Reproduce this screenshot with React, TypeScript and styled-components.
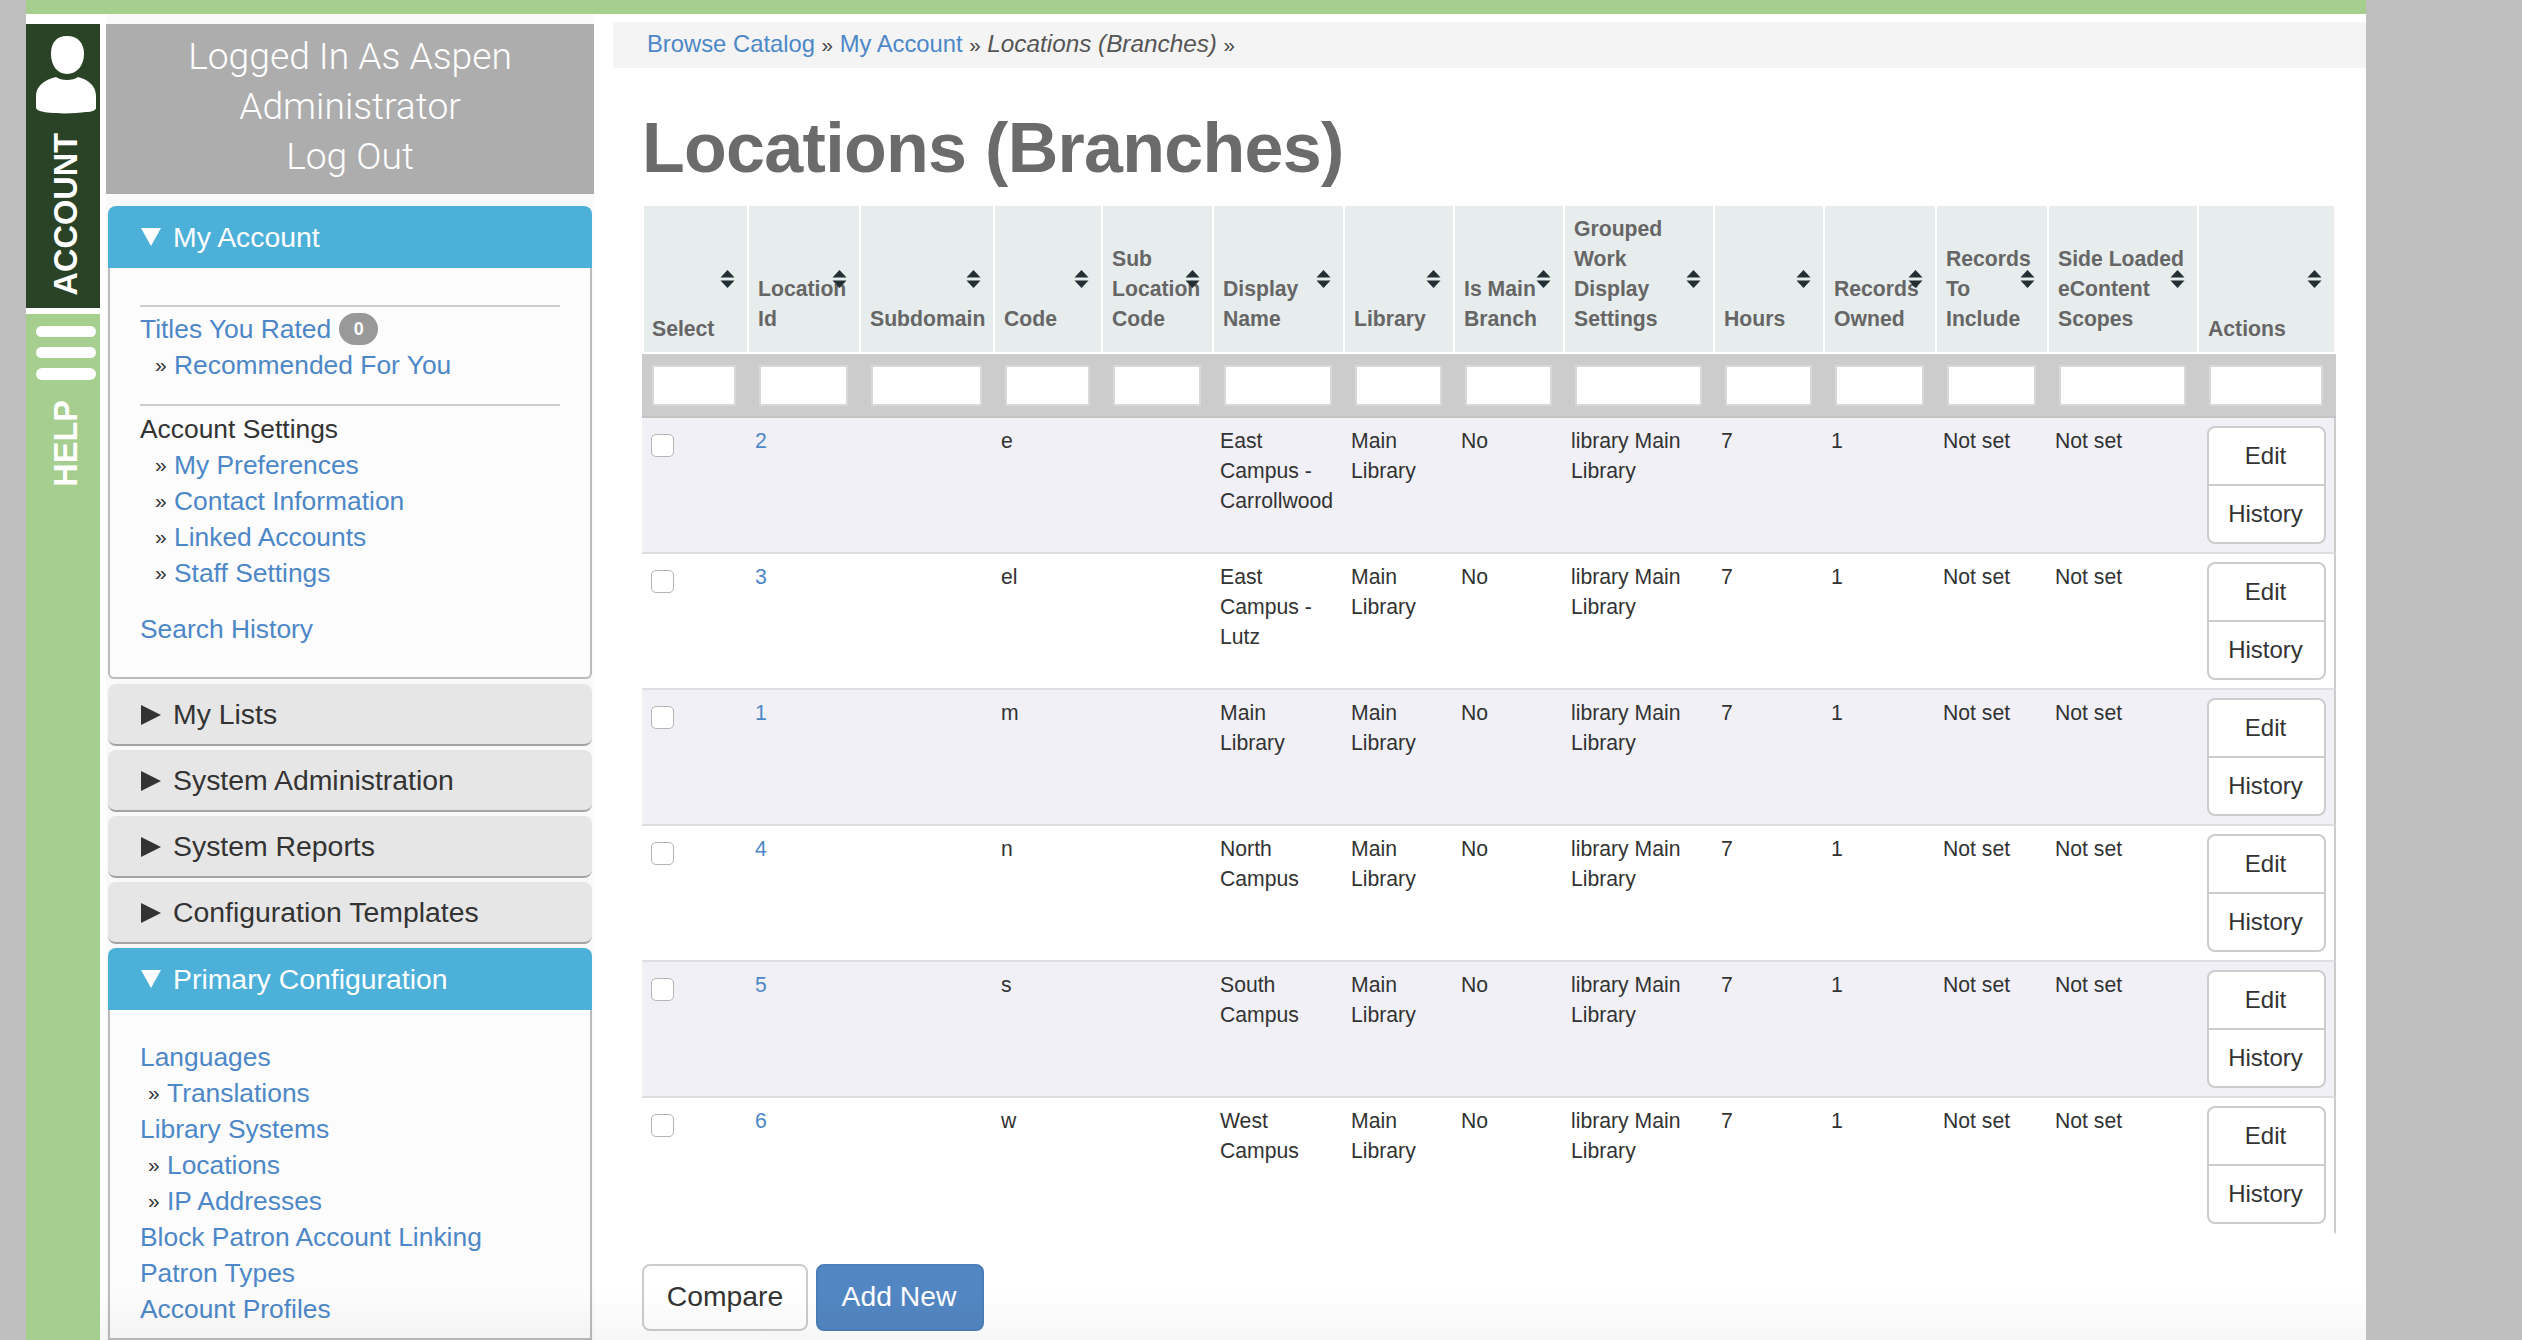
import React from 'react';
import styled, { createGlobalStyle } from 'styled-components';

const GlobalStyle = createGlobalStyle`
  html, body {
    margin: 0;
    height: 1340px;
    overflow: hidden;
    background: #bfbfbf;
    font-family: "Liberation Sans", Arial, sans-serif;
    color: #333;
  }
`;

const Page = styled.div`
  position: relative;
  width: 2340px;
  height: 1340px;
  margin-left: 26px;
  background: #fff;
  overflow: hidden;

  &::after {
    content: '';
    position: absolute;
    left: 74px;
    right: 0;
    bottom: 0;
    height: 50px;
    background: linear-gradient(rgba(0, 0, 0, 0), rgba(0, 0, 0, 0.035));
    pointer-events: none;
  }
`;

const TopBar = styled.div`
  height: 14px;
  background: #a5ce8f;
`;

const Columns = styled.div`
  display: flex;
  height: 1326px;
`;

const Rail = styled.div`
  width: 74px;
  display: flex;
  flex-direction: column;
  padding-top: 10px;
  gap: 6px;
`;

const RailTab = styled.div<{ $dark?: boolean }>`
  display: flex;
  flex-direction: column;
  align-items: center;
  padding-left: 6px;
  box-sizing: border-box;
  background: ${p => (p.$dark ? '#2a4226' : '#a5ce8f')};
  height: ${p => (p.$dark ? '284px' : 'auto')};
  flex: ${p => (p.$dark ? '0 0 auto' : '1')};
  padding-top: 12px;
  color: #fff;
`;

const RailLabel = styled.span<{ $gap: number }>`
  writing-mode: vertical-rl;
  transform: rotate(180deg);
  font-size: 32.5px;
  font-weight: bold;
  line-height: 1;
  margin-top: ${p => p.$gap}px;
`;

const Sidebar = styled.div`
  width: 488px;
  margin-left: 6px;
  background: #f9f9f9;
  padding: 10px 0 0;
  display: flex;
  flex-direction: column;
  box-sizing: border-box;
`;

const LoginBox = styled.div`
  height: 170px;
  background: #adadad;
  color: #fff;
  font-family: Roboto, "Liberation Sans", sans-serif;
  font-weight: 300;
  font-size: 37.2px;
  line-height: 50px;
  text-align: center;
  padding-top: 7px;
  box-sizing: border-box;
  margin-bottom: 12px;
`;

const PanelHeader = styled.div<{ $open?: boolean }>`
  height: 62px;
  box-sizing: border-box;
  margin: 0 2px;
  padding-left: 33px;
  padding-top: ${p => (p.$open ? '0' : '1px')};
  display: flex;
  align-items: center;
  gap: 12px;
  font-size: 28.4px;
  border-radius: ${p => (p.$open ? '8px 8px 0 0' : '8px')};
  background: ${p => (p.$open ? '#4db0d9' : '#e6e6e6')};
  color: ${p => (p.$open ? '#fff' : '#333')};
  border-bottom: ${p => (p.$open ? 'none' : '2px solid #a3a3a3')};
  margin-bottom: ${p => (p.$open ? '0' : '4px')};
`;

const Arrow = styled.span<{ $open?: boolean }>`
  width: 0;
  height: 0;
  border-style: solid;
  border-color: transparent;
  ${p =>
    p.$open
      ? `border-width: 18px 10px 0 10px; border-top-color: #fff;`
      : `border-width: 10px 0 10px 20px; border-left-color: #333;`}
`;

const PanelBody = styled.div<{ $fill?: boolean; $top: number }>`
  margin: 0 2px ${p => (p.$fill ? '0' : '5px')};
  box-sizing: border-box;
  height: ${p => (p.$fill ? 'auto' : '411px')};
  flex: ${p => (p.$fill ? '1' : '0 0 auto')};
  padding: ${p => p.$top}px 30px 0;
  background: #fcfcfc;
  border: 2px solid #bbb;
  border-top: none;
  border-radius: ${p => (p.$fill ? '0' : '0 0 6px 6px')};
  font-size: 26.4px;
  line-height: 36px;
`;

const Rule = styled.hr<{ $before: number; $after: number }>`
  height: 2px;
  margin: ${p => p.$before}px 0 ${p => p.$after}px;
  border: none;
  background: #ccc;
`;

const Link = styled.a`
  color: #4d87c7;
  text-decoration: none;
`;

const MenuRow = styled.div<{ $indent?: number; $before?: number }>`
  display: flex;
  align-items: center;
  height: 36px;
  white-space: nowrap;
  padding-left: ${p => p.$indent ?? 0}px;
  margin-top: ${p => p.$before ?? 0}px;
`;

const Chevrons = styled.span`
  font-size: 21px;
  width: 19px;
  color: #333;
`;

const Badge = styled.span`
  display: inline-flex;
  align-items: center;
  justify-content: center;
  width: 39px;
  height: 32px;
  margin-left: 8px;
  border-radius: 16px;
  background: #999;
  color: #fff;
  font-size: 18px;
  font-weight: bold;
`;

const Main = styled.div`
  flex: 1;
  margin-left: 19px;
  padding-top: 8px;
  min-width: 0;
`;

const Breadcrumbs = styled.div`
  height: 46px;
  background: #f4f4f4;
  padding-left: 34px;
  font-size: 23.8px;
  line-height: 44px;
  color: #444;
`;

const Separator = styled.span`
  font-size: 20.5px;
`;

const Crumb = styled.span`
  font-style: italic;
  font-size: 24.3px;
  color: #555;
`;

const Title = styled.h1`
  margin: 40px 0 18px 29px;
  font-size: 70px;
  letter-spacing: -0.7px;
  line-height: 80px;
  font-weight: bold;
  color: #6b6b6b;
`;

const Content = styled.div`
  margin-left: 29px;
`;

const Table = styled.table`
  width: 1694px;
  table-layout: fixed;
  border-collapse: separate;
  border-spacing: 0;
  font-size: 21.2px;
  line-height: 30px;
`;

const HeadCell = styled.th<{ $low?: boolean }>`
  position: relative;
  height: 148px;
  box-sizing: border-box;
  padding: 0 0 ${p => (p.$low ? '8px' : '18px')} 9px;
  vertical-align: bottom;
  text-align: left;
  font-weight: bold;
  color: #666;
  white-space: nowrap;
  background: #e7eded;
  border-right: 2px solid #fff;
  border-bottom: 2px solid #fff;

  &:first-child {
    border-left: 2px solid #fff;
    padding-left: 8px;
  }
`;

const SortIcon = styled.svg`
  position: absolute;
  top: 64px;
  right: 12px;
  width: 15px;
  height: 18px;
`;

const FilterCell = styled.td`
  height: 64px;
  box-sizing: border-box;
  padding: 0 0 0 10px;
  background: #ccc;
  border-bottom: 2px solid #c4c4c4;
`;

const FilterInput = styled.input`
  display: block;
  width: calc(100% - 13px);
  height: 41px;
  box-sizing: border-box;
  padding: 0;
  background: #fff;
  border: 2px solid #d8d8d8;
  border-radius: 0;
  outline: none;
`;

const Cell = styled.td<{ $odd: boolean }>`
  height: 136px;
  box-sizing: border-box;
  padding: 8px 6px 0;
  vertical-align: top;
  background: ${p => (p.$odd ? '#f0f0f6' : '#fff')};
  border-bottom: 2px solid #dedee2;

  tr:last-child & {
    border-bottom: 2px solid transparent;
  }

  &:last-child {
    border-right: 2px solid #ccc;
  }
`;

const Check = styled.input`
  appearance: none;
  display: block;
  width: 23px;
  height: 23px;
  margin: 8px 0 0 3px;
  background: #fff;
  border: 1.5px solid #b5b5b5;
  border-radius: 5px;
`;

const ActionGroup = styled.div`
  display: flex;
  flex-direction: column;
  width: 119px;
  margin: 0 0 0 2px;
`;

const ActionButton = styled.button`
  height: 58px;
  padding: 0 2px 0 0;
  background: #fff;
  border: 2px solid #ccc;
  color: #333;
  font: 24px "Liberation Sans", Arial, sans-serif;

  &:first-child {
    border-radius: 8px 8px 0 0;
    border-bottom: none;
  }

  &:last-child {
    height: 60px;
    border-radius: 0 0 8px 8px;
  }
`;

const Footer = styled.div`
  display: flex;
  gap: 8px;
  margin-top: 30px;
`;

const FooterButton = styled.button<{ $primary?: boolean }>`
  height: 67px;
  width: ${p => (p.$primary ? '168px' : '166px')};
  padding: 0 ${p => (p.$primary ? '2px' : '0')} 2px 0;
  border-radius: 8px;
  border: 2px solid ${p => (p.$primary ? '#4a7eb8' : '#ccc')};
  background: ${p => (p.$primary ? '#5286c2' : '#fff')};
  color: ${p => (p.$primary ? '#fff' : '#333')};
  font: 28.3px "Liberation Sans", Arial, sans-serif;
`;

const columns = [
  { width: 107, label: ['Select'], low: true },
  { width: 112, label: ['Location', 'Id'] },
  { width: 134, label: ['Subdomain'] },
  { width: 108, label: ['Code'] },
  { width: 111, label: ['Sub', 'Location', 'Code'] },
  { width: 131, label: ['Display', 'Name'] },
  { width: 110, label: ['Library'] },
  { width: 110, label: ['Is Main', 'Branch'] },
  { width: 150, label: ['Grouped', 'Work', 'Display', 'Settings'] },
  { width: 110, label: ['Hours'] },
  { width: 112, label: ['Records', 'Owned'] },
  { width: 112, label: ['Records', 'To', 'Include'] },
  { width: 150, label: ['Side Loaded', 'eContent', 'Scopes'] },
  { width: 137, label: ['Actions'], low: true },
];

const locations = [
  { id: '2', code: 'e', name: ['East', 'Campus -', 'Carrollwood'] },
  { id: '3', code: 'el', name: ['East', 'Campus -', 'Lutz'] },
  { id: '1', code: 'm', name: ['Main', 'Library'] },
  { id: '4', code: 'n', name: ['North', 'Campus'] },
  { id: '5', code: 's', name: ['South', 'Campus'] },
  { id: '6', code: 'w', name: ['West', 'Campus'] },
];

function Lines({ items }: { items: string[] }) {
  return (
    <>
      {items.map((line, i) => (
        <React.Fragment key={line}>
          {i > 0 && <br />}
          {line}
        </React.Fragment>
      ))}
    </>
  );
}

function Sort() {
  return (
    <SortIcon viewBox="0 0 15 18">
      <path d="M7.5 0 L14.5 7.5 H0.5 Z" fill="#222e33" />
      <path d="M0.5 10.5 H14.5 L7.5 18 Z" fill="#222e33" />
    </SortIcon>
  );
}

function SubLink({ children, indent }: { children: string; indent: number }) {
  return (
    <MenuRow $indent={indent}>
      <Chevrons>»</Chevrons>
      <Link>{children}</Link>
    </MenuRow>
  );
}

function App() {
  return (
    <Page>
      <GlobalStyle />
      <TopBar />
      <Columns>
        <Rail>
          <RailTab $dark>
            <svg width="60" height="78" viewBox="0 0 60 78">
              <path
                d="M31 0 C42 0 48 7 48 18 C48 29 41 38 31 38 C21 38 15 29 15 18 C15 7 20 0 31 0 Z"
                fill="#fff"
              />
              <path
                d="M20 41 C25 45 37 45 42 41 C53 44 60 50 60 60 V72 C60 74 56 76 50 76 C38 78 12 78 4 75 C1 74 0 73 0 71 V60 C0 50 8 44 20 41 Z"
                fill="#fff"
              />
            </svg>
            <RailLabel $gap={19}>ACCOUNT</RailLabel>
          </RailTab>
          <RailTab>
            <svg width="60" height="54" viewBox="0 0 60 54">
              <rect x="0" y="0" width="60" height="11" rx="5.5" fill="#fff" />
              <rect x="0" y="21" width="60" height="11" rx="5.5" fill="#fff" />
              <rect x="0" y="42" width="60" height="12" rx="6" fill="#fff" />
            </svg>
            <RailLabel $gap={20}>HELP</RailLabel>
          </RailTab>
        </Rail>

        <Sidebar>
          <LoginBox>
            Logged In As Aspen
            <br />
            Administrator
            <br />
            Log Out
          </LoginBox>

          <PanelHeader $open>
            <Arrow $open />
            My Account
          </PanelHeader>
          <PanelBody $top={37}>
            <Rule $before={0} $after={4} />
            <MenuRow>
              <Link>Titles You Rated</Link>
              <Badge>0</Badge>
            </MenuRow>
            <SubLink indent={15}>Recommended For You</SubLink>
            <Rule $before={21} $after={5} />
            <MenuRow>Account Settings</MenuRow>
            <SubLink indent={15}>My Preferences</SubLink>
            <SubLink indent={15}>Contact Information</SubLink>
            <SubLink indent={15}>Linked Accounts</SubLink>
            <SubLink indent={15}>Staff Settings</SubLink>
            <MenuRow $before={20}>
              <Link>Search History</Link>
            </MenuRow>
          </PanelBody>

          {['My Lists', 'System Administration', 'System Reports', 'Configuration Templates'].map(name => (
            <PanelHeader key={name}>
              <Arrow />
              {name}
            </PanelHeader>
          ))}

          <PanelHeader $open>
            <Arrow $open />
            Primary Configuration
          </PanelHeader>
          <PanelBody $fill $top={29}>
            <MenuRow>
              <Link>Languages</Link>
            </MenuRow>
            <SubLink indent={8}>Translations</SubLink>
            <MenuRow>
              <Link>Library Systems</Link>
            </MenuRow>
            <SubLink indent={8}>Locations</SubLink>
            <SubLink indent={8}>IP Addresses</SubLink>
            <MenuRow>
              <Link>Block Patron Account Linking</Link>
            </MenuRow>
            <MenuRow>
              <Link>Patron Types</Link>
            </MenuRow>
            <MenuRow>
              <Link>Account Profiles</Link>
            </MenuRow>
          </PanelBody>
        </Sidebar>

        <Main>
          <Breadcrumbs>
            <Link>Browse Catalog</Link> <Separator>»</Separator> <Link>My Account</Link> <Separator>»</Separator>{' '}
            <Crumb>Locations (Branches)</Crumb> <Separator>»</Separator>
          </Breadcrumbs>
          <Title>Locations (Branches)</Title>
          <Content>
            <Table>
              <colgroup>
                {columns.map(col => (
                  <col key={col.label.join(' ')} width={col.width} />
                ))}
              </colgroup>
              <thead>
                <tr>
                  {columns.map(col => (
                    <HeadCell key={col.label.join(' ')} $low={col.low}>
                      <Lines items={col.label} />
                      <Sort />
                    </HeadCell>
                  ))}
                </tr>
                <tr>
                  {columns.map(col => (
                    <FilterCell key={col.label.join(' ')}>
                      <FilterInput type="text" />
                    </FilterCell>
                  ))}
                </tr>
              </thead>
              <tbody>
                {locations.map((row, i) => {
                  const odd = i % 2 === 0;
                  return (
                    <tr key={row.id}>
                      <Cell $odd={odd}>
                        <Check type="checkbox" />
                      </Cell>
                      <Cell $odd={odd}>
                        <Link>{row.id}</Link>
                      </Cell>
                      <Cell $odd={odd} />
                      <Cell $odd={odd}>{row.code}</Cell>
                      <Cell $odd={odd} />
                      <Cell $odd={odd}>
                        <Lines items={row.name} />
                      </Cell>
                      <Cell $odd={odd}>
                        Main
                        <br />
                        Library
                      </Cell>
                      <Cell $odd={odd}>No</Cell>
                      <Cell $odd={odd}>
                        library Main
                        <br />
                        Library
                      </Cell>
                      <Cell $odd={odd}>7</Cell>
                      <Cell $odd={odd}>1</Cell>
                      <Cell $odd={odd}>Not set</Cell>
                      <Cell $odd={odd}>Not set</Cell>
                      <Cell $odd={odd}>
                        <ActionGroup>
                          <ActionButton>Edit</ActionButton>
                          <ActionButton>History</ActionButton>
                        </ActionGroup>
                      </Cell>
                    </tr>
                  );
                })}
              </tbody>
            </Table>
            <Footer>
              <FooterButton>Compare</FooterButton>
              <FooterButton $primary>Add New</FooterButton>
            </Footer>
          </Content>
        </Main>
      </Columns>
    </Page>
  );
}

export default App;
